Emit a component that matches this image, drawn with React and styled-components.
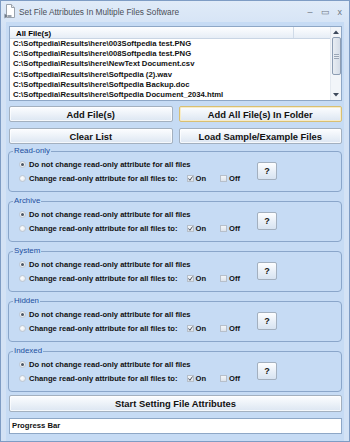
import React from "react";
import styled, { createGlobalStyle } from "styled-components";

const GlobalStyle = createGlobalStyle`
  html, body {
    margin: 0;
    padding: 0;
    width: 350px;
    height: 442px;
    overflow: hidden;
    background: #d6e4f5;
  }
  * { box-sizing: border-box; }
`;

const files = [
  "C:\\Softpedia\\Results\\here\\003Softpedia test.PNG",
  "C:\\Softpedia\\Results\\here\\008Softpedia test.PNG",
  "C:\\Softpedia\\Results\\here\\NewText Document.csv",
  "C:\\Softpedia\\Results\\here\\Softpedia (2).wav",
  "C:\\Softpedia\\Results\\here\\Softpedia Backup.doc",
  "C:\\Softpedia\\Results\\here\\Softpedia Document_2034.html"
];

const groups = ["Read-only", "Archive", "System", "Hidden", "Indexed"];

const Window = styled.div`
  width: 350px;
  height: 442px;
  border: 1px solid #7e9cc4;
  background: linear-gradient(#e0ebf8, #d3e2f5 30px, #d3e2f5);
  display: flex;
  flex-direction: column;
  font-family: "Liberation Sans", Arial, sans-serif;
`;

const TitleBar = styled.div`
  height: 21px;
  display: flex;
  align-items: center;
  padding: 0 4px 0 3px;
  color: #4a4f57;
  font-size: 8.3px;
  gap: 2px;
`;

const TitleText = styled.span`
  flex: 1;
  white-space: nowrap;
  padding-top: 1px;
`;

const Controls = styled.div`
  display: flex;
  align-items: center;
  gap: 8px;
  color: #6f7784;
  font-size: 9px;
  padding-right: 3px;
`;

const Body = styled.div`
  flex: 1;
  margin: 0 5px;
  padding: 4px 2px 0 2px;
  background: #c6dbf4;
  display: flex;
  flex-direction: column;
`;

const Table = styled.div`
  margin-left: 1px;
  height: 75px;
  border: 1px solid #8ea7c6;
  background: #fff;
  display: flex;
`;

const TableMain = styled.div`
  flex: 1;
  display: flex;
  flex-direction: column;
`;

const Header = styled.div`
  height: 12px;
  display: flex;
  background: linear-gradient(#fdfeff, #e6edf6);
  border-bottom: 1px solid #c9d5e4;
  font-size: 7.8px;
  font-weight: bold;
`;

const HeaderCell = styled.div`
  flex: ${p => (p.$grow ? 1 : "0 0 36px")};
  padding: 2px 0 0 6px;
  border-right: ${p => (p.$grow ? "1px solid #d0dbe8" : "none")};
`;

const Row = styled.div`
  height: 10.2px;
  line-height: 10.2px;
  padding-left: 3px;
  font-size: 7.7px;
  font-weight: bold;
  white-space: nowrap;
  color: #111;
`;

const Scroll = styled.div`
  width: 11px;
  background: #f2f5f9;
  border-left: 1px solid #e4e9f0;
  display: flex;
  flex-direction: column;
  align-items: center;
`;

const Arrow = styled.div`
  height: 10px;
  display: flex;
  align-items: center;
  justify-content: center;
`;

const Thumb = styled.div`
  width: 9px;
  height: 38px;
  border: 1px solid #8d9db3;
  border-radius: 2px;
  background: linear-gradient(90deg, #e8edf3, #d5dde8);
  display: flex;
  align-items: center;
  justify-content: center;
`;

const Grip = styled.div`
  width: 5px;
  height: 5px;
  background: repeating-linear-gradient(#9aa6b6 0 1px, #e6ebf1 1px 2px);
`;

const ScrollTrack = styled.div`
  flex: 1;
`;

const ButtonGrid = styled.div`
  margin: 5px 0 0 1px;
  display: grid;
  grid-template-columns: 1fr 1fr;
  column-gap: 6px;
  row-gap: 6px;
`;

const Button = styled.button`
  height: ${p => (p.$tall ? 17 : 16)}px;
  margin: 0;
  padding: 0;
  border: 1px solid ${p => (p.$focus ? "#d9bf72" : "#a3b0bf")};
  border-radius: 2px;
  background: linear-gradient(#fcfdff, #eef3f9 45%, #dce6f2);
  box-shadow: inset 0 0 0 1px ${p => (p.$focus ? "#f7ecc8" : "rgba(255,255,255,0.7)")};
  font-family: "Liberation Sans", Arial, sans-serif;
  font-size: 9.4px;
  font-weight: bold;
  color: #111;
  white-space: nowrap;
`;

const Groups = styled.div`
  margin-top: 2px;
  display: flex;
  flex-direction: column;
  gap: 4px;
`;

const Group = styled.fieldset`
  margin: 0;
  padding: 0 0 5px 10px;
  height: 46px;
  border: 1px solid #8aa6ca;
  border-radius: 4px;
  min-width: 0;
`;

const Legend = styled.legend`
  margin-left: -6px;
  padding: 0 1px;
  font-size: 7.9px;
  line-height: 10px;
  color: #1d4f9f;
`;

const GroupInner = styled.div`
  display: flex;
  align-items: center;
  padding-top: 1px;
`;

const Options = styled.div`
  flex: 0 0 238px;
  display: flex;
  flex-direction: column;
`;

const OptionRow = styled.div`
  height: 14px;
  display: flex;
  align-items: center;
  font-size: 7.6px;
  font-weight: bold;
  color: #111;
  white-space: nowrap;
`;

const Radio = styled.span`
  width: 7px;
  height: 7px;
  border-radius: 50%;
  border: 1px solid #c0c8d2;
  background: radial-gradient(circle at 40% 40%, #ffffff, #dce2e9);
  margin-right: 3px;
  display: flex;
  align-items: center;
  justify-content: center;
  &::after {
    content: "";
    width: 3px;
    height: 3px;
    border-radius: 50%;
    background: ${p => (p.$on ? "#4b5563" : "transparent")};
  }
`;

const Check = styled.span`
  width: 7px;
  height: 7px;
  border: 1px solid #b6bfca;
  background: linear-gradient(#f3f5f8, #dde3ea);
  margin: ${p => (p.$first ? "0 2px 0 9px" : "0 2px 0 14px")};
  display: flex;
  align-items: center;
  justify-content: center;
`;

const HelpButton = styled.button`
  width: 20px;
  height: 18px;
  margin: 0;
  padding: 0;
  border: 1px solid #a3b0bf;
  border-radius: 2px;
  background: linear-gradient(#fdfeff, #e9f0f8 50%, #d7e3f1);
  font-family: "Liberation Sans", Arial, sans-serif;
  font-size: 9px;
  font-weight: bold;
  color: #111;
`;

const Footer = styled.div`
  margin: 3px 0 0 1px;
  display: flex;
  flex-direction: column;
  gap: 6px;
`;

const Progress = styled.div`
  height: 16px;
  border: 1px solid #8ea7c6;
  background: #fff;
  padding-left: 2px;
  font-size: 7.7px;
  font-weight: bold;
  line-height: 14px;
  color: #111;
`;

const AppIcon = () => (
  <svg width="13" height="15" viewBox="0 0 13 15">
    <path d="M2.5 0.5h5l3 3v10h-8z" fill="#fff" stroke="#9aa3ad" />
    <path d="M7.5 0.5v3h3" fill="#e5e9ee" stroke="#9aa3ad" />
    <path d="M0.5 9.5l3 2.5-3 2.5z" fill="#6f7a88" />
    <path d="M3.5 12h4" stroke="#6f7a88" strokeWidth="1.4" />
  </svg>
);

const Tick = () => (
  <svg width="5" height="5" viewBox="0 0 5 5">
    <path d="M0.5 2.5l1.4 1.8L4.5 0.5" fill="none" stroke="#3b4350" strokeWidth="0.9" />
  </svg>
);

const Tri = ({ up }) => (
  <svg width="6" height="4" viewBox="0 0 6 4">
    <path d={up ? "M0 4L3 0.5 6 4z" : "M0 0L3 3.5 6 0z"} fill="#3e4a5c" />
  </svg>
);

const AttributeGroup = ({ name }) => (
  <Group>
    <Legend>{name}</Legend>
    <GroupInner>
      <Options>
        <OptionRow>
          <Radio $on />
          Do not change read-only attribute for all files
        </OptionRow>
        <OptionRow>
          <Radio />
          Change read-only attribute for all files to:
          <Check $first>
            <Tick />
          </Check>
          On
          <Check />
          Off
        </OptionRow>
      </Options>
      <HelpButton>?</HelpButton>
    </GroupInner>
  </Group>
);

export default function App() {
  return (
    <>
      <GlobalStyle />
      <Window>
        <TitleBar>
          <AppIcon />
          <TitleText>Set File Attributes In Multiple Files Software</TitleText>
          <Controls>
            <span>–</span>
            <span>▭</span>
            <span>x</span>
          </Controls>
        </TitleBar>
        <Body>
          <Table>
            <TableMain>
              <Header>
                <HeaderCell $grow>All File(s)</HeaderCell>
                <HeaderCell />
              </Header>
              {files.map(f => (
                <Row key={f}>{f}</Row>
              ))}
            </TableMain>
            <Scroll>
              <Arrow>
                <Tri up />
              </Arrow>
              <Thumb>
                <Grip />
              </Thumb>
              <ScrollTrack />
              <Arrow>
                <Tri />
              </Arrow>
            </Scroll>
          </Table>
          <ButtonGrid>
            <Button>Add File(s)</Button>
            <Button $focus>Add All File(s) In Folder</Button>
            <Button>Clear List</Button>
            <Button>Load Sample/Example Files</Button>
          </ButtonGrid>
          <Groups>
            {groups.map(g => (
              <AttributeGroup key={g} name={g} />
            ))}
          </Groups>
          <Footer>
            <Button $tall>Start Setting File Attributes</Button>
            <Progress>Progress Bar</Progress>
          </Footer>
        </Body>
      </Window>
    </>
  );
}
